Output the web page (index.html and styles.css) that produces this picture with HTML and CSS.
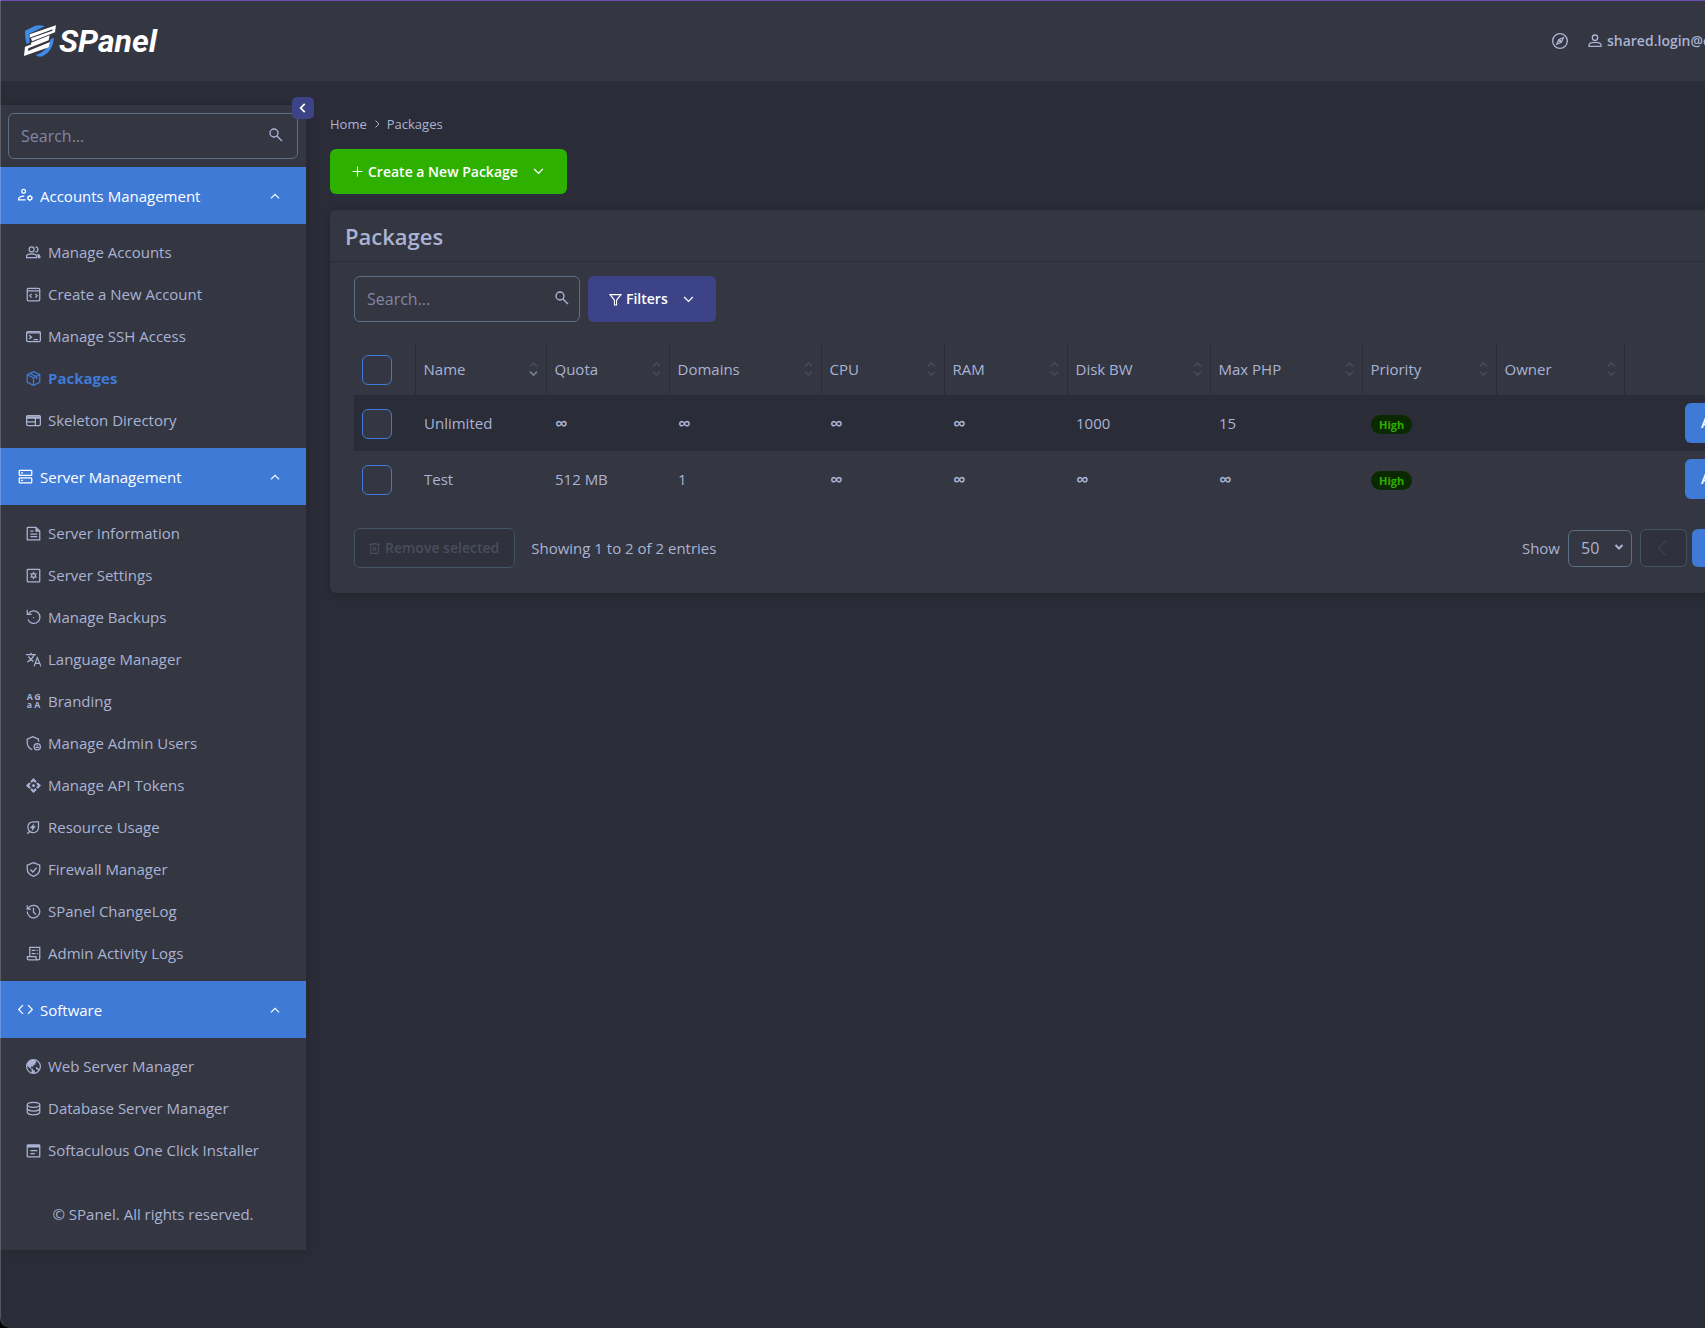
FILE: index.html
```html
<!DOCTYPE html>
<html lang="en">
<head>
    <meta charset="UTF-8">
    <meta name="viewport" content="width=device-width, initial-scale=1">
    <title>SPanel - Packages</title>
    <link rel="stylesheet" href="styles.css">
</head>
<body>
<svg class="sprite" aria-hidden="true">
    <symbol id="search" viewBox="0 0 24 24"><circle cx="9" cy="9" r="6"/><path d="M13 13l8 8"/></symbol>
    <symbol id="up" viewBox="0 0 24 24"><path d="M5 16l7-7 7 7"/></symbol>
    <symbol id="down" viewBox="0 0 24 24"><path d="M5 8l7 7 7-7"/></symbol>
    <symbol id="left" viewBox="0 0 24 24"><path d="M15 5l-7 7 7 7"/></symbol>
    <symbol id="prev" viewBox="0 0 24 24"><path d="M14 4l-8 8 8 8"/></symbol>
    <symbol id="right" viewBox="0 0 24 24"><path d="M9 5l7 7-7 7"/></symbol>
    <symbol id="plus" viewBox="0 0 24 24"><path d="M12 3v18M3 12h18"/></symbol>
    <symbol id="sort" viewBox="0 0 10 16"><path class="asc" d="M1 5l4-4 4 4"/><path d="M1 11l4 4 4-4"/></symbol>
    <symbol id="filter" viewBox="0 0 24 24"><path d="M2 3h20l-8 10v9h-4v-9z"/></symbol>
    <symbol id="trash" viewBox="0 0 24 24"><path d="M2 4h20M8 3h8M5 4v17h14V4M9 9l6 7M15 9l-6 7"/></symbol>
    <symbol id="compass" viewBox="0 0 24 24"><circle cx="12" cy="12" r="11"/><path d="M17 7l-3 7-7 3 3-7z"/><circle cx="12" cy="12" r="1"/></symbol>
    <symbol id="person" viewBox="0 0 24 24"><circle cx="12" cy="7" r="4"/><path d="M3 20v-2q0-4 9-4t9 4v2z"/></symbol>
    <symbol id="manage" viewBox="0 0 24 24"><circle cx="9" cy="5" r="3"/><path d="M12 19H1v-2q1-4 9-4"/><circle cx="19" cy="16" r="3"/><path d="M19 11v2M19 19v2M15 14l1 1M22 17l1 1M15 18l1-1M22 15l1-1"/></symbol>
    <symbol id="people" viewBox="0 0 24 24"><circle cx="9" cy="7" r="4"/><path d="M1 20v-2q0-4 8-4t8 4v2zM15 3q4 0 4 4t-4 4"/><path class="solid" d="M18 14q5 1 5 4v3h-4z"/></symbol>
    <symbol id="codebox" viewBox="0 0 24 24"><rect x="2" y="2" width="20" height="20" rx="2"/><path d="M2 6h20M9 11l-3 3 3 3M15 11l3 3-3 3"/></symbol>
    <symbol id="terminal" viewBox="0 0 24 24"><rect x="1" y="4" width="22" height="16" rx="2"/><path d="M1 6h22M5 10l4 3-4 3M12 17h7"/></symbol>
    <symbol id="box" viewBox="0 0 24 24"><path d="M12 1l10 5v12l-10 5-10-5V6zM2 6l10 5 10-5M12 11v12M7 4l10 5v4"/></symbol>
    <symbol id="web" viewBox="0 0 24 24"><rect x="1" y="4" width="22" height="16" rx="2"/><path d="M1 6h22M1 8h22M1 14h14M15 9v11"/></symbol>
    <symbol id="server" viewBox="0 0 24 24"><rect x="2" y="2" width="20" height="8" rx="1"/><rect x="2" y="14" width="20" height="8" rx="1"/><path d="M5 6h3M5 18h3"/></symbol>
    <symbol id="doc" viewBox="0 0 24 24"><path d="M3 2h13l6 6v14H2V3zM7 8h5M7 13h11M7 17h11"/><path class="solid" d="M15 2v7h7z"/></symbol>
    <symbol id="settings" viewBox="0 0 24 24"><rect x="2" y="2" width="20" height="20" rx="1"/><circle cx="12" cy="12" r="3"/><path d="M12 6v3M12 15v3M7 9l2 1M15 14l2 1M7 15l2-1M15 10l2-1"/></symbol>
    <symbol id="backup" viewBox="0 0 24 24"><path d="M3 15a10 10 0 1 0 1-9M2 0v7h7"/><circle class="solid" cx="12" cy="12" r="1"/></symbol>
    <symbol id="translate" viewBox="0 0 24 24"><path d="M0 4h16M8 1v3M13 4q-2 7-11 12M4 7q3 6 8 8M13 23l5-14 6 14M15 18h7"/></symbol>
    <symbol id="brand" viewBox="0 0 24 24"><g class="letters"><text x="1" y="10">A</text><text x="13" y="10">G</text><text x="1" y="23">a</text><text x="13" y="23">A</text></g></symbol>
    <symbol id="admin" viewBox="0 0 24 24"><path d="M10 22q-8-4-8-11V5l9-4 9 4v4"/><circle cx="18" cy="17" r="5"/><path d="M15 18h6M18 14v2"/></symbol>
    <symbol id="api" viewBox="0 0 24 24"><path class="solid" d="M12 0l5 5-2 3-3-3-3 3-2-3zM12 24l5-5-2-3-3 3-3-3-2 3zM0 12l5-5 3 2-3 3 3 3-3 2zM24 12l-5-5-3 2 3 3-3 3 3 2zM12 9l3 3-3 3-3-3z"/></symbol>
    <symbol id="energy" viewBox="0 0 24 24"><path d="M20 3h-8q-9 0-9 9 0 4 3 6 3 3 7 2 7-1 7-9zM2 22l4-4"/><path class="solid" d="M13 5l-7 8h4l-1 5 7-8h-4z"/></symbol>
    <symbol id="shield" viewBox="0 0 24 24"><path d="M12 1l10 4v6q0 8-10 12-10-4-10-12V5zM7 12l4 4 6-7"/></symbol>
    <symbol id="history" viewBox="0 0 24 24"><path d="M2 12a10 10 0 1 0 3-7L3 8M2 2v6h6M12 6v7l4 4"/></symbol>
    <symbol id="receipt" viewBox="0 0 24 24"><path d="M6 17V2h16v17q0 3-3 3H5q-3 0-3-3v-2h14v2q0 3 3 3M9 7h6M9 12h6M17 7h2M17 12h2"/></symbol>
    <symbol id="code" viewBox="0 0 24 24"><path d="M8 5l-7 7 7 7M16 5l7 7-7 7"/></symbol>
    <symbol id="globe" viewBox="0 0 24 24"><circle cx="12" cy="12" r="11"/><path class="solid" d="M15 2q-10-3-14 8l8 7v5q2 2 5 1v-5h-3v-3H8v-3h4V9h3V6h2zM16 12v4l3 1 1 3 2-3z"/></symbol>
    <symbol id="database" viewBox="0 0 24 24"><ellipse cx="12" cy="6" rx="10" ry="4"/><path d="M2 6v12q1 4 10 4t10-4V6M2 12q1 4 10 4t10-4"/></symbol>
    <symbol id="installer" viewBox="0 0 24 24"><rect x="2" y="3" width="20" height="19" rx="1"/><path d="M2 4h20M2 6h20M7 12h11M7 17h7"/></symbol>
</svg>

<div class="app">
    <header class="topbar">
        <a class="logo" href="#">
            <svg viewBox="0 0 96 96" aria-hidden="true">
                <path class="logo-blue" d="M62 4Q48-2 32 3L3 17Q2 38 8 57L17 53L15 27ZM90 38L80 42Q76 68 50 84L35 90Q44 98 56 94Q88 76 90 38Z"/>
                <path class="logo-white" d="M17 28L96 1L93 22L24 49L21 40L85 17L86 13L17 38ZM21 53L77 31L74 46L13 70L12 78L78 51L74 67L0 93L3 65L68 41L22 59Z"/>
            </svg>
            <span>SPanel</span>
        </a>
        <div class="user-nav">
            <a href="#" aria-label="Explore"><svg class="icon"><use href="#compass"/></svg></a>
            <a class="user" href="#"><svg class="icon"><use href="#person"/></svg>shared.login@c</a>
        </div>
    </header>

    <div class="layout">
        <aside class="sidebar">
            <button class="collapse" type="button" aria-label="Collapse menu"><svg class="icon"><use href="#left"/></svg></button>
            <div class="search menu-search">
                <input type="text" placeholder="Search..." aria-label="Search menu">
                <svg class="icon"><use href="#search"/></svg>
            </div>
            <nav>
                <button class="group" type="button"><svg class="icon"><use href="#manage"/></svg>Accounts Management<svg class="icon arrow"><use href="#up"/></svg></button>
                <ul>
                    <li><a href="#"><svg class="icon"><use href="#people"/></svg>Manage Accounts</a></li>
                    <li><a href="#"><svg class="icon"><use href="#codebox"/></svg>Create a New Account</a></li>
                    <li><a href="#"><svg class="icon"><use href="#terminal"/></svg>Manage SSH Access</a></li>
                    <li><a class="active" href="#"><svg class="icon"><use href="#box"/></svg>Packages</a></li>
                    <li><a href="#"><svg class="icon"><use href="#web"/></svg>Skeleton Directory</a></li>
                </ul>
                <button class="group" type="button"><svg class="icon"><use href="#server"/></svg>Server Management<svg class="icon arrow"><use href="#up"/></svg></button>
                <ul>
                    <li><a href="#"><svg class="icon"><use href="#doc"/></svg>Server Information</a></li>
                    <li><a href="#"><svg class="icon"><use href="#settings"/></svg>Server Settings</a></li>
                    <li><a href="#"><svg class="icon"><use href="#backup"/></svg>Manage Backups</a></li>
                    <li><a href="#"><svg class="icon"><use href="#translate"/></svg>Language Manager</a></li>
                    <li><a href="#"><svg class="icon"><use href="#brand"/></svg>Branding</a></li>
                    <li><a href="#"><svg class="icon"><use href="#admin"/></svg>Manage Admin Users</a></li>
                    <li><a href="#"><svg class="icon"><use href="#api"/></svg>Manage API Tokens</a></li>
                    <li><a href="#"><svg class="icon"><use href="#energy"/></svg>Resource Usage</a></li>
                    <li><a href="#"><svg class="icon"><use href="#shield"/></svg>Firewall Manager</a></li>
                    <li><a href="#"><svg class="icon"><use href="#history"/></svg>SPanel ChangeLog</a></li>
                    <li><a href="#"><svg class="icon"><use href="#receipt"/></svg>Admin Activity Logs</a></li>
                </ul>
                <button class="group" type="button"><svg class="icon"><use href="#code"/></svg>Software<svg class="icon arrow"><use href="#up"/></svg></button>
                <ul>
                    <li><a href="#"><svg class="icon"><use href="#globe"/></svg>Web Server Manager</a></li>
                    <li><a href="#"><svg class="icon"><use href="#database"/></svg>Database Server Manager</a></li>
                    <li><a href="#"><svg class="icon"><use href="#installer"/></svg>Softaculous One Click Installer</a></li>
                </ul>
            </nav>
            <p class="copyright">© SPanel. All rights reserved.</p>
        </aside>

        <main class="content">
            <nav class="breadcrumb" aria-label="Breadcrumb">
                <a href="#">Home</a>
                <svg class="icon"><use href="#right"/></svg>
                <a href="#">Packages</a>
            </nav>
            <button class="btn btn-green" type="button"><svg class="icon"><use href="#plus"/></svg>Create a New Package<svg class="icon caret"><use href="#down"/></svg></button>

            <section class="card">
                <h1>Packages</h1>
                <div class="card-body">
                    <div class="toolbar">
                        <div class="search">
                            <input type="text" placeholder="Search..." aria-label="Search packages">
                            <svg class="icon"><use href="#search"/></svg>
                        </div>
                        <button class="btn btn-indigo" type="button"><svg class="icon"><use href="#filter"/></svg>Filters<svg class="icon caret"><use href="#down"/></svg></button>
                    </div>

                    <table>
                        <colgroup>
                            <col class="col-check"><col class="col-name"><col class="col-small"><col class="col-large"><col class="col-small"><col class="col-small"><col class="col-disk"><col class="col-large"><col class="col-priority"><col class="col-owner"><col>
                        </colgroup>
                        <thead>
                            <tr>
                                <th><input type="checkbox" aria-label="Select all"></th>
                                <th class="sorted"><div>Name<svg class="sort"><use href="#sort"/></svg></div></th>
                                <th><div>Quota<svg class="sort"><use href="#sort"/></svg></div></th>
                                <th><div>Domains<svg class="sort"><use href="#sort"/></svg></div></th>
                                <th><div>CPU<svg class="sort"><use href="#sort"/></svg></div></th>
                                <th><div>RAM<svg class="sort"><use href="#sort"/></svg></div></th>
                                <th><div>Disk BW<svg class="sort"><use href="#sort"/></svg></div></th>
                                <th><div>Max PHP<svg class="sort"><use href="#sort"/></svg></div></th>
                                <th><div>Priority<svg class="sort"><use href="#sort"/></svg></div></th>
                                <th><div>Owner<svg class="sort"><use href="#sort"/></svg></div></th>
                                <th></th>
                            </tr>
                        </thead>
                        <tbody>
                            <tr>
                                <td><input type="checkbox" aria-label="Select Unlimited"></td>
                                <td>Unlimited</td>
                                <td><span class="infinity">∞</span></td>
                                <td><span class="infinity">∞</span></td>
                                <td><span class="infinity">∞</span></td>
                                <td><span class="infinity">∞</span></td>
                                <td>1000</td>
                                <td>15</td>
                                <td><span class="badge">High</span></td>
                                <td></td>
                                <td class="actions"><button class="btn btn-blue" type="button">Actions</button></td>
                            </tr>
                            <tr>
                                <td><input type="checkbox" aria-label="Select Test"></td>
                                <td>Test</td>
                                <td>512 MB</td>
                                <td>1</td>
                                <td><span class="infinity">∞</span></td>
                                <td><span class="infinity">∞</span></td>
                                <td><span class="infinity">∞</span></td>
                                <td><span class="infinity">∞</span></td>
                                <td><span class="badge">High</span></td>
                                <td></td>
                                <td class="actions"><button class="btn btn-blue" type="button">Actions</button></td>
                            </tr>
                        </tbody>
                    </table>

                    <div class="table-footer">
                        <button class="btn btn-remove" type="button" disabled><svg class="icon"><use href="#trash"/></svg>Remove selected</button>
                        <span>Showing 1 to 2 of 2 entries</span>
                        <div class="pager">
                            <label for="page-size">Show</label>
                            <div class="select">
                                <select id="page-size"><option>50</option></select>
                                <svg class="icon"><use href="#down"/></svg>
                            </div>
                            <div class="pages">
                                <button class="page" type="button" disabled aria-label="Previous page"><svg class="icon"><use href="#prev"/></svg></button>
                                <button class="page current" type="button">1</button>
                                <button class="page" type="button" disabled aria-label="Next page"><svg class="icon"><use href="#right"/></svg></button>
                            </div>
                        </div>
                    </div>
                </div>
            </section>
        </main>
    </div>
</div>
</body>
</html>
```

FILE: styles.css
```css
*{
    box-sizing: border-box;
}
html{
    background-color: #000;
}
body{
    margin: 0;
    overflow-x: hidden;
    color: #aab3d4;
    font: 15px/24px "Open Sans", "Noto Sans", sans-serif;
}
a{
    color: inherit;
    text-decoration: none;
}
button, input, select{
    font: inherit;
    color: inherit;
}
ul, p, h1{
    margin: 0;
    padding: 0;
    list-style: none;
}
.sprite{
    display: none;
}
.icon{
    width: 16px;
    height: 16px;
    flex: none;
    fill: none;
    stroke: currentColor;
    stroke-width: 2px;
}
.solid{
    fill: currentColor;
    stroke: none;
}
.letters{
    fill: currentColor;
    stroke: none;
    font-size: 14px;
    font-weight: 700;
}

/* the panel is wider than the window, the rest is cut */
.app{
    position: relative;
    min-height: 100vh;
    margin-right: -126px;
    background-color: #2a2c37;
    border-bottom-left-radius: 10px;
    overflow: hidden;
}
.app::after{
    content: "";
    position: absolute;
    top: 0;
    right: 0;
    bottom: 0;
    left: 0;
    border-left: 1px solid rgba(255, 255, 255, .2);
    border-bottom-left-radius: 10px;
    pointer-events: none;
}

/* top bar */
.topbar{
    display: flex;
    align-items: center;
    justify-content: space-between;
    height: 81px;
    padding-left: 24px;
    background-color: #343641;
    border-top: 1px solid #6b50b4;
}
.logo{
    display: flex;
    align-items: center;
    gap: 3px;
    color: #fff;
    font: italic 700 32px/32px Roboto, sans-serif;
}
.logo svg{
    width: 32px;
    height: 32px;
}
.logo-blue{
    fill: #418ae6;
}
.logo-white{
    fill: #fff;
}
.user-nav{
    display: flex;
    align-items: center;
    gap: 19px;
    width: 279px;
    font-size: 14px;
    font-weight: 600;
}
.user-nav a{
    display: flex;
    align-items: center;
    gap: 4px;
}

/* side menu */
.layout{
    display: flex;
    align-items: flex-start;
}
.sidebar{
    position: relative;
    flex: none;
    width: 306px;
    margin-top: 24px;
    padding: 8px 0 24px;
    background-color: #343641;
    box-shadow: 0 0 10px rgba(0, 0, 0, .15);
}
.collapse{
    position: absolute;
    top: -8px;
    right: -8px;
    z-index: 1;
    display: flex;
    align-items: center;
    justify-content: center;
    width: 22px;
    height: 22px;
    padding: 0;
    border: 0;
    border-radius: 5px;
    background-color: #3c4487;
    color: #fff;
}
.collapse .icon{
    width: 14px;
    height: 14px;
    stroke-width: 3px;
}
.search{
    position: relative;
}
.search input{
    display: block;
    width: 100%;
    height: 46px;
    padding: 0 48px 0 12px;
    border: 1px solid #587085;
    border-radius: 6px;
    background-color: #343641;
    font-size: 16px;
}
.search input::placeholder{
    color: #8087a1;
    opacity: 1;
}
.search .icon{
    position: absolute;
    top: 14px;
    right: 10px;
}
.menu-search{
    margin: 0 8px 8px;
}
.menu-search .icon{
    right: 14px;
}
.group{
    display: flex;
    align-items: center;
    gap: 7px;
    width: 100%;
    height: 57px;
    padding: 0 24px 0 18px;
    border: 0;
    background-color: #3f7ad7;
    color: #fff;
    font-weight: 500;
}
nav .icon{
    width: 15px;
    height: 15px;
}
.group .arrow{
    width: 14px;
    height: 14px;
    margin-left: auto;
}
.sidebar ul{
    padding: 7px 0;
}
.sidebar li a{
    display: flex;
    align-items: center;
    gap: 7px;
    height: 42px;
    padding-left: 26px;
}
.sidebar li .active{
    color: #3f7ad7;
    font-weight: 700;
}
.copyright{
    padding: 24px 0 0;
    text-align: center;
}

/* content */
.content{
    flex: 1;
    min-width: 0;
    padding: 31px 24px 0;
}
.breadcrumb{
    display: flex;
    align-items: center;
    gap: 4px;
    margin-bottom: 13px;
    font-size: 13px;
}
.breadcrumb .icon{
    width: 12px;
    height: 12px;
}
.btn{
    display: inline-flex;
    align-items: center;
    gap: 4px;
    height: 40px;
    padding: 0 16px;
    border: 0;
    border-radius: 6px;
    color: #fff;
    font-size: 14px;
    font-weight: 600;
}
.btn .icon{
    width: 13px;
    height: 13px;
}
.btn .caret{
    width: 15px;
    height: 15px;
    margin-left: 9px;
}
.btn-green{
    height: 45px;
    padding: 0 21px;
    background-color: #2eb000;
}
.btn-indigo{
    height: 46px;
    padding: 0 20px 0 21px;
    background-color: #3c4487;
}
.btn-blue{
    width: 90px;
    background-color: #3f7ad7;
}
.btn-remove{
    padding: 0 15px 0 13px;
    border: 1px solid #445364;
    background-color: #2f313c;
    color: #4a4d5b;
}
.card{
    margin-top: 16px;
    border-radius: 6px;
    background-color: #343641;
    box-shadow: 0 2px 8px rgba(0, 0, 0, .2);
}
.card h1{
    height: 52px;
    padding: 0 15px;
    border-bottom: 1px solid #2a2c37;
    font-size: 22px;
    font-weight: 600;
    line-height: 52px;
}
.card-body{
    padding: 14px 24px 25px;
}
.toolbar{
    display: flex;
    gap: 8px;
}
.toolbar .search{
    width: 226px;
}

/* packages table */
table{
    width: 100%;
    margin: 22px 0 21px;
    border-collapse: collapse;
    table-layout: fixed;
}
.col-check{ width: 61px; }
.col-name{ width: 131px; }
.col-small{ width: 123px; }
.col-large{ width: 152px; }
.col-disk{ width: 143px; }
.col-priority{ width: 134px; }
.col-owner{ width: 128px; }
th{
    height: 51px;
    padding: 0 8px 2px;
    border-left: 1px solid #2a2c37;
    font-weight: 500;
    text-align: left;
}
th:first-child{
    border-left: 0;
}
th div{
    display: flex;
    align-items: center;
    justify-content: space-between;
}
td{
    height: 56px;
    padding: 0 9px;
}
th:first-child, td:first-child{
    padding: 1px 8px 0;
}
tbody tr:nth-child(odd){
    background-color: #2a2c37;
}
td.actions{
    padding: 0 8px 0 0;
    text-align: right;
}
.infinity{
    font-size: 18px;
    font-weight: 600;
}
.sort{
    width: 9px;
    height: 14px;
    fill: none;
    stroke: #464956;
    stroke-width: 2px;
}
.sorted .sort{
    stroke: #747b96;
}
.asc{
    stroke: #464956;
}
input[type="checkbox"]{
    display: block;
    appearance: none;
    width: 30px;
    height: 30px;
    margin: 0;
    border: 1px solid #3f7ad7;
    border-radius: 6px;
    background-color: #343641;
}
.badge{
    display: inline-block;
    padding: 0 8px;
    border-radius: 10px;
    background-color: #0b2900;
    color: #2eb000;
    font-size: 11px;
    font-weight: 700;
    line-height: 19px;
}

/* table footer */
.table-footer{
    display: flex;
    align-items: center;
    gap: 16px;
}
.pager{
    display: flex;
    align-items: center;
    gap: 8px;
    margin-left: auto;
}
.select{
    position: relative;
}
.select select{
    appearance: none;
    display: block;
    width: 64px;
    height: 37px;
    padding: 0 12px;
    border: 1px solid #587085;
    border-radius: 6px;
    background-color: #343641;
    font-size: 16px;
}
.select .icon{
    position: absolute;
    top: 11px;
    right: 7px;
    width: 12px;
    height: 12px;
    stroke-width: 4px;
    pointer-events: none;
}
.pages{
    display: flex;
    gap: 5px;
}
.page{
    display: flex;
    align-items: center;
    justify-content: center;
    width: 47px;
    height: 38px;
    padding: 0;
    border: 1px solid #445364;
    border-radius: 6px;
    background-color: #2f313c;
    color: #4a4d5b;
}
.page .icon{
    width: 22px;
    height: 22px;
    stroke-width: 1px;
}
.page.current{
    width: 39px;
    border: 0;
    background-color: #3f7ad7;
    color: #fff;
}
```
